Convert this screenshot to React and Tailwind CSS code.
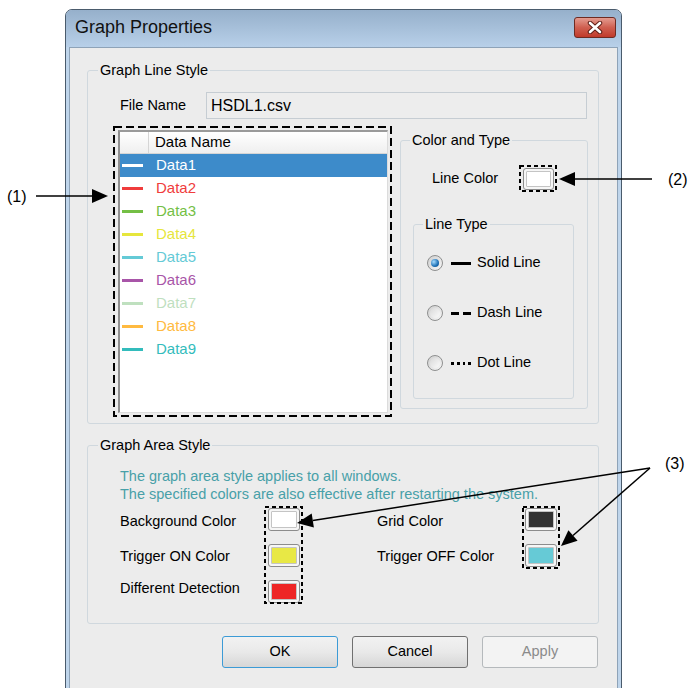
import React from "react";

const rows = [
  { name: "Data1", line: "bg-white", text: "text-white", sel: true },
  { name: "Data2", line: "bg-[#f03c3c]", text: "text-[#f03c3c]" },
  { name: "Data3", line: "bg-[#74bf45]", text: "text-[#74bf45]" },
  { name: "Data4", line: "bg-[#e6e63c]", text: "text-[#e6e63c]" },
  { name: "Data5", line: "bg-[#64cad6]", text: "text-[#64cad6]" },
  { name: "Data6", line: "bg-[#a855a8]", text: "text-[#a855a8]" },
  { name: "Data7", line: "bg-[#bfe0bf]", text: "text-[#bfe0bf]" },
  { name: "Data8", line: "bg-[#ffba40]", text: "text-[#ffba40]" },
  { name: "Data9", line: "bg-[#33bcbc]", text: "text-[#33bcbc]" },
];

function DashedBox({ w, h, sizeClass, dash = "4 3", className = "", children }) {
  return (
    <div className={`relative shrink-0 ${sizeClass} ${className}`}>
      {children}
      <svg className="absolute inset-0 pointer-events-none" width={w} height={h} viewBox={`0 0 ${w} ${h}`}>
        <rect x="1" y="1" width={w - 2} height={h - 2} fill="none" stroke="#000" strokeWidth="2" strokeDasharray={dash} />
      </svg>
    </div>
  );
}

function Swatch({ fill, w = "w-[32px]", h = "h-[23px]" }) {
  return (
    <div className={`${w} ${h} rounded-[3px] border border-[#8c8c8c] bg-[#f6f6f6] p-[2px]`}>
      <div className={`w-full h-full rounded-[1px] border border-[#c4c4c4] ${fill}`} />
    </div>
  );
}

function Radio({ checked }) {
  return (
    <span className="w-[16px] h-[16px] rounded-full border border-[#8e8f8f] bg-gradient-to-br from-[#cfcfcf] to-[#f7f7f7] flex items-center justify-center shrink-0">
      {checked ? (
        <span className="w-[8px] h-[8px] rounded-full bg-[radial-gradient(circle_at_35%_35%,#a6dcff,#1d70b5_60%,#0d4a86)]" />
      ) : (
        <span className="w-[10px] h-[10px] rounded-full bg-gradient-to-br from-[#d9d9d9] to-[#fbfbfb]" />
      )}
    </span>
  );
}

function Button({ children, variant }) {
  const base =
    "w-[116px] h-[32px] rounded-[3px] border flex items-center justify-center text-[14.5px]";
  if (variant === "ok")
    return (
      <div className={`${base} border-[#3c9bd6] bg-gradient-to-b from-[#f2f2f2] via-[#e9e9e9] to-[#d6d6d6] text-black`}>
        {children}
      </div>
    );
  if (variant === "disabled")
    return (
      <div className={`${base} border-[#b5b9bc] bg-[#f3f3f3] text-[#8a8a8a]`}>{children}</div>
    );
  return (
    <div className={`${base} border-[#707070] bg-gradient-to-b from-[#f2f2f2] via-[#e9e9e9] to-[#d6d6d6] text-black`}>
      {children}
    </div>
  );
}

export default function App() {
  return (
    <div className="relative w-[691px] h-[688px] overflow-hidden bg-white text-black font-['Liberation_Sans',Arial,sans-serif]">
      {/* window */}
      <div className="ml-[65px] mt-[9px] w-[557px] h-[720px] flex flex-col rounded-t-[7px] border border-[#4a5b6c] bg-[#bfd5eb] overflow-hidden">
        <div className="h-[37px] shrink-0 flex items-start justify-between bg-gradient-to-b from-[#96b0cb] to-[#b8d0e9]">
          <span className="mt-[7px] ml-[9px] text-[18px] leading-[20px] text-[#111]">Graph Properties</span>
          <div className="mt-[7px] mr-[5px] w-[42px] h-[21px] rounded-[3px] border border-[#6e2b22] bg-gradient-to-b from-[#e39b90] via-[#cf5f50] to-[#c0392a] flex items-center justify-center">
            <svg width="16" height="13" viewBox="0 0 16 13">
              <path d="M3 2 L13 11 M13 2 L3 11" stroke="#5c1d15" strokeWidth="4.5" strokeLinecap="round" />
              <path d="M3 2 L13 11 M13 2 L3 11" stroke="#ffffff" strokeWidth="2.6" strokeLinecap="round" />
            </svg>
          </div>
        </div>
        <div className="flex-1 px-[3px]">
          <div className="h-full border border-[#8ea3b8] bg-[#ececec] pl-[17px] pt-[14px] text-[14.5px]">
            {/* Graph Line Style */}
            <fieldset className="w-[512px] h-[362px] border border-[#d0d8de] rounded-[3px]">
              <legend className="ml-[10px] px-[2px] leading-[16px]">Graph Line Style</legend>
              <div className="mt-[14px] ml-[32px] flex items-center">
                <span className="w-[86px]">File Name</span>
                <div className="w-[381px] h-[27px] border border-[#c6cdd3] bg-[#ededed] flex items-center pl-[4px] text-[16px]">
                  HSDL1.csv
                </div>
              </div>
              <div className="mt-[7px] ml-[25px] flex items-start">
                {/* list */}
                <DashedBox w={279} h={291} sizeClass="w-[279px] h-[291px]" dash="8 4" className="pl-[5px] pr-[4px] py-[4px]">
                  <div className="h-full bg-white border-l-2 border-t-2 border-r border-b border-l-[#8f8f8f] border-t-[#9a9a9a] border-r-[#dcdcdc] border-b-[#dcdcdc] text-[15px]">
                    <div className="flex h-[22px] bg-gradient-to-b from-white to-[#efefef] border-b border-[#d5d5d5]">
                      <div className="w-[29px] border-r border-[#d5d5d5]" />
                      <div className="pl-[6px] flex items-center">Data Name</div>
                    </div>
                    {rows.map((r) => (
                      <div
                        key={r.name}
                        className={`flex items-center h-[23px] ${r.sel ? "bg-[#3d8bca]" : ""}`}
                      >
                        <span className={`ml-[2px] w-[21px] h-[3px] ${r.line}`} />
                        <span className={`ml-[13px] ${r.text}`}>{r.name}</span>
                      </div>
                    ))}
                  </div>
                </DashedBox>
                {/* Color and Type */}
                <fieldset className="ml-[8px] mt-[6px] w-[188px] h-[277px] border border-[#d0d8de] rounded-[3px]">
                  <legend className="ml-[9px] px-[2px] leading-[16px]">Color and Type</legend>
                  <div className="mt-[17px] ml-[31px] flex items-center">
                    <span className="w-[87px]">Line Color</span>
                    <DashedBox w={38} h={27} sizeClass="w-[38px] h-[27px]" className="flex items-center justify-center">
                      <Swatch fill="bg-white" w="w-[31px]" h="h-[22px]" />
                    </DashedBox>
                  </div>
                  <fieldset className="mt-[24px] ml-[12px] w-[161px] h-[183px] border border-[#d0d8de] rounded-[3px]">
                    <legend className="ml-[9px] px-[2px] leading-[16px]">Line Type</legend>
                    <div className="mt-[21px] pl-[13px] flex flex-col gap-[30px]">
                      <div className="h-[20px] flex items-center">
                        <Radio checked />
                        <span className="ml-[8px] w-[20px] h-[3px] bg-black" />
                        <span className="ml-[6px]">Solid Line</span>
                      </div>
                      <div className="h-[20px] flex items-center">
                        <Radio />
                        <span className="ml-[8px] w-[20px] flex gap-[4px]">
                          <span className="w-[8px] h-[3px] bg-black" />
                          <span className="w-[8px] h-[3px] bg-black" />
                        </span>
                        <span className="ml-[6px]">Dash Line</span>
                      </div>
                      <div className="h-[20px] flex items-center">
                        <Radio />
                        <span className="ml-[8px] w-[20px] flex gap-[3px]">
                          <span className="w-[3px] h-[3px] bg-black" />
                          <span className="w-[3px] h-[3px] bg-black" />
                          <span className="w-[3px] h-[3px] bg-black" />
                          <span className="w-[3px] h-[3px] bg-black" />
                        </span>
                        <span className="ml-[6px]">Dot Line</span>
                      </div>
                    </div>
                  </fieldset>
                </fieldset>
              </div>
            </fieldset>

            {/* Graph Area Style */}
            <fieldset className="mt-[13px] w-[512px] h-[187px] border border-[#d0d8de] rounded-[3px]">
              <legend className="ml-[10px] px-[2px] leading-[16px]">Graph Area Style</legend>
              <div className="mt-[14px] ml-[32px] text-[#48a0a8] leading-[18px]">
                <div>The graph area style applies to all windows.</div>
                <div>The specified colors are also effective after restarting the system.</div>
              </div>
              <div className="mt-[3px] ml-[32px] flex items-start">
                <div className="w-[144px] pt-[4px] flex flex-col">
                  <div className="h-[23px] flex items-center">Background Color</div>
                  <div className="mt-[12px] h-[23px] flex items-center">Trigger ON Color</div>
                  <div className="mt-[9px] h-[23px] flex items-center">Different Detection</div>
                </div>
                <DashedBox w={39} h={98} sizeClass="w-[39px] h-[98px]" className="pl-[4px] pt-[2px] flex flex-col gap-[13px]">
                  <Swatch fill="bg-white" />
                  <Swatch fill="bg-[#e8e845]" />
                  <Swatch fill="bg-[#ee2626]" />
                </DashedBox>
                <div className="ml-[74px] w-[145px] pt-[4px] flex flex-col">
                  <div className="h-[23px] flex items-center">Grid Color</div>
                  <div className="mt-[12px] h-[23px] flex items-center">Trigger OFF Color</div>
                </div>
                <DashedBox w={38} h={63} sizeClass="w-[38px] h-[63px]" className="pl-[3px] pt-[2px] flex flex-col gap-[13px]">
                  <Swatch fill="bg-[#333333]" />
                  <Swatch fill="bg-[#66cad6]" />
                </DashedBox>
              </div>
            </fieldset>

            {/* buttons */}
            <div className="mt-[12px] w-[511px] flex justify-end gap-[14px]">
              <Button variant="ok">OK</Button>
              <Button>Cancel</Button>
              <Button variant="disabled">Apply</Button>
            </div>
          </div>
        </div>
      </div>

      {/* annotations */}
      <svg className="absolute inset-0 pointer-events-none" width="691" height="688" viewBox="0 0 691 688">
        <g stroke="#000" strokeWidth="1.5" fill="none">
          <line x1="36" y1="196" x2="94" y2="196" />
          <line x1="652" y1="179" x2="574" y2="179" />
          <line x1="650" y1="468" x2="312.8" y2="520.5" />
          <line x1="650" y1="468" x2="573" y2="535.5" />
        </g>
        <g fill="#000">
          <polygon points="108,196 92,189 92,203" />
          <polygon points="559,179 575,172 575,186" />
          <polygon points="297,523 311.7,513.6 313.9,527.4" />
          <polygon points="561,546 568.4,530.2 577.6,540.8" />
        </g>
        <g fontFamily="Liberation Sans, Arial, sans-serif" fontSize="16" fill="#000">
          <text x="7" y="202">(1)</text>
          <text x="668" y="185">(2)</text>
          <text x="665" y="469">(3)</text>
        </g>
      </svg>
    </div>
  );
}
